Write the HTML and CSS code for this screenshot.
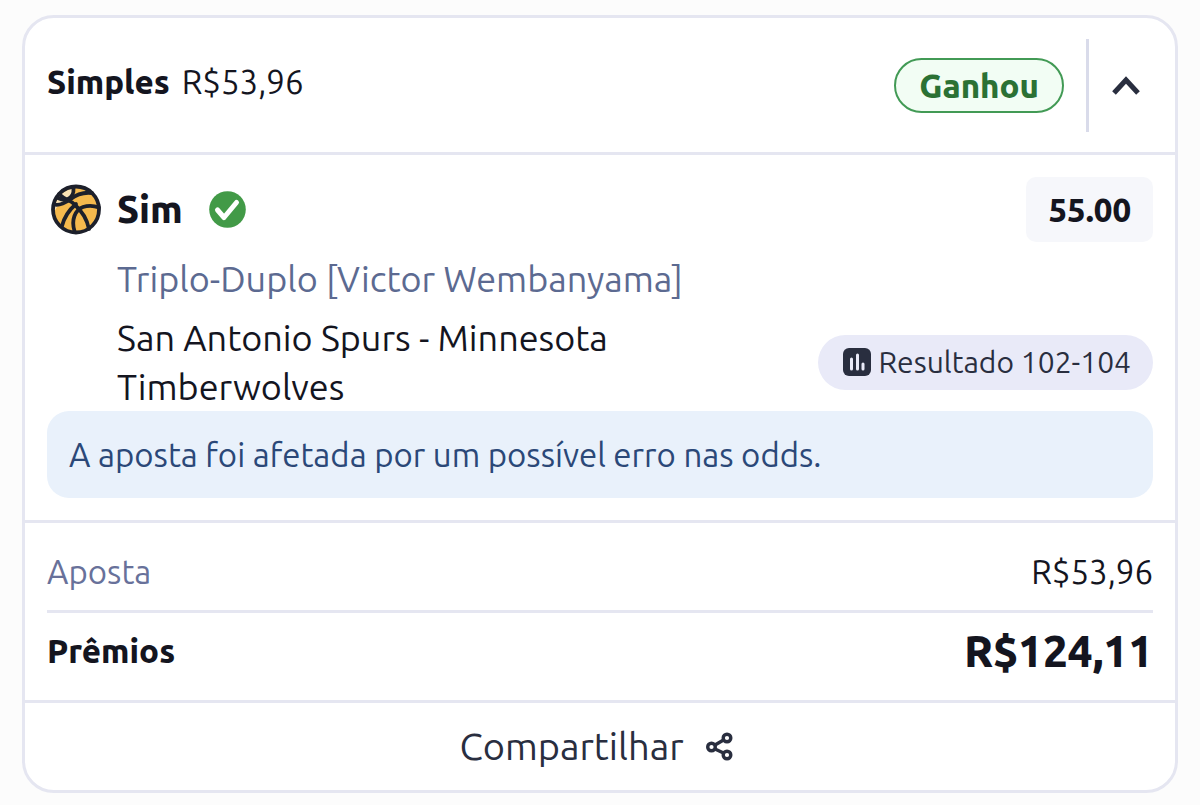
FILE: index.html
```html
<!DOCTYPE html>
<html lang="pt-BR">
<head>
    <meta charset="UTF-8">
    <meta name="viewport" content="width=device-width, initial-scale=1.0">
    <title>Aposta Simples</title>
    <link rel="stylesheet" href="styles.css">
</head>
<body>
    <article class="bet">
        <header class="bet-header">
            <h1 class="bet-title">Simples <span class="stake">R$53,96</span></h1>
            <span class="status">Ganhou</span>
            <button class="toggle" type="button" aria-label="Recolher" aria-expanded="true">
                <svg width="32" height="32" viewBox="0 0 32 32" fill="none" stroke="currentColor" stroke-width="5" aria-hidden="true">
                    <path d="M3 23 15 10 27 23" />
                </svg>
            </button>
        </header>
        <section class="selection">
            <div class="pick">
                <svg class="ball" width="52" height="52" viewBox="0 0 52 52" fill="none" stroke="#1d202b" stroke-width="3.8" stroke-linecap="round" aria-hidden="true">
                    <circle cx="26" cy="25.5" r="23" fill="#f5b94d" stroke="none" />
                    <path d="M4 28C4 16 12 6 24 4L22 11 16 15 7 23Z" fill="#fbe3b5" stroke="none" />
                    <circle cx="26" cy="25.500" r="23" />
                    <path d="M9 10C15 16 20 16 24 20 32 27 37 35 39 45" />
                    <path d="M23.500 4C24 10 21 14 17 15.500 13 16.500 10 15 8 14" />
                    <path d="M4 20.500C10 22 15 19 20 15.500 27 10 34 8 42 9" />
                    <path d="M12 42C14 34 19 26 26 20" />
                    <path d="M24.500 47C21 36 25 26 33 23 39 21 45 22 49 23.500" />
                </svg>
                <h2 class="pick-name">Sim</h2>
                <svg class="check" width="37" height="37" viewBox="0 0 37 37" fill="none" role="img" aria-label="Ganhou">
                    <circle cx="18.5" cy="18.5" r="18.3" fill="#429a47" />
                    <path d="M8.5 19 15 26.5 27.5 11.5" stroke="#fff" stroke-width="5" stroke-linecap="round" stroke-linejoin="round" />
                </svg>
                <span class="odds">55.00</span>
            </div>
            <p class="market">Triplo-Duplo [Victor Wembanyama]</p>
            <div class="event">
                <p class="teams">San Antonio Spurs - Minnesota Timberwolves</p>
                <span class="result">
                    <svg width="28" height="28" viewBox="0 0 28 28" fill="none" aria-hidden="true">
                        <rect width="28" height="28" rx="6" fill="#292e3f" />
                        <path d="M8.5 11V21M14.5 7V21M20 16V21" stroke="#e9eaf8" stroke-width="3" stroke-linecap="round" />
                    </svg>
                    Resultado 102-104
                </span>
            </div>
            <p class="notice">A aposta foi afetada por um possível erro nas odds.</p>
        </section>
        <dl class="totals">
            <div class="total">
                <dt>Aposta</dt>
                <dd>R$53,96</dd>
            </div>
            <div class="total prize">
                <dt>Prêmios</dt>
                <dd>R$124,11</dd>
            </div>
        </dl>
        <button class="share" type="button">
            Compartilhar
            <svg width="40" height="32" viewBox="0 0 40 32" fill="none" stroke="currentColor" stroke-width="3.4" aria-hidden="true">
                <circle cx="10.5" cy="16" r="3.8" />
                <circle cx="26" cy="7" r="3.8" />
                <circle cx="26" cy="24" r="3.8" />
                <path d="M14 14 22.5 9M14 18 22.5 22" />
            </svg>
        </button>
    </article>
</body>
</html>
```
FILE: styles.css
```css
* {
    box-sizing: border-box;
}
body {
    margin: 0;
    padding: 15px 22px 12px;
    background-color: #fcfcfc;
    color: #14151f;
    font-family: Ubuntu, "Noto Sans", sans-serif;
    font-size: 33px;
    font-weight: 430;
    line-height: 49px;
}
h1,
h2,
p,
dl,
dd {
    margin: 0;
}
h1,
h2 {
    font-weight: 800;
}
button {
    border: 0;
    padding: 0;
    background: none;
    color: #292e3f;
    font: inherit;
    cursor: pointer;
}
svg {
    display: block;
    flex: none;
}
.bet {
    border: 3px solid #e5e6f1;
    border-radius: 32px;
    background-color: #fff;
}
.bet-header {
    display: flex;
    align-items: center;
    padding: 21px 22px 20px;
    border-bottom: 3px solid #e5e6f1;
}
.bet-title {
    flex: 1;
    align-self: flex-start;
    font-size: 33px;
    line-height: 86px;
}
.stake {
    margin-left: 4px;
    font-weight: 430;
}
.status {
    padding: 1px 23px;
    border: 2px solid #429a55;
    border-radius: 28px;
    background-color: #f2fdf4;
    color: #2b7134;
    font-weight: 800;
}
.toggle {
    display: flex;
    align-items: center;
    height: 93px;
    margin-left: 22px;
    padding: 0 10px 0 22px;
    border-left: 3px solid #d9dbea;
}
.selection {
    padding: 22px;
    border-bottom: 3px solid #e5e6f1;
}
.pick {
    display: flex;
    align-items: center;
    padding-left: 3px;
}
.pick-name {
    margin: 0 26px 0 15px;
    font-size: 38px;
}
.odds {
    margin-left: auto;
    padding: 8px 22px;
    border-radius: 10px;
    background-color: #f6f7fb;
    font-weight: 800;
}
.market {
    margin: 12px 0 10px;
    padding-left: 70px;
    color: #5c6a91;
    font-size: 36px;
}
.event {
    display: flex;
    align-items: center;
    justify-content: space-between;
    padding-left: 70px;
}
.teams {
    max-width: 540px;
    font-size: 36px;
}
.result {
    display: flex;
    flex: none;
    align-items: center;
    gap: 7px;
    padding: 3px 22px 3px 25px;
    border-radius: 28px;
    background-color: #e9eaf8;
    color: #292e3f;
    font-size: 30px;
}
.notice {
    padding: 19px 22px;
    border-radius: 22px;
    background-color: #e9f1fb;
    color: #2b4878;
}
.totals {
    padding: 9px 22px 12px;
    border-bottom: 3px solid #e5e6f1;
}
.total {
    display: flex;
    align-items: center;
    justify-content: space-between;
    height: 78px;
}
.total dt {
    color: #68719a;
}
.prize {
    border-top: 3px solid #e5e6f1;
    font-weight: 800;
}
.prize dt {
    color: inherit;
}
.prize dd {
    font-size: 44px;
}
.share {
    display: flex;
    align-items: center;
    justify-content: center;
    gap: 17px;
    width: 100%;
    padding: 19px 22px;
    font-size: 38px;
}
```
